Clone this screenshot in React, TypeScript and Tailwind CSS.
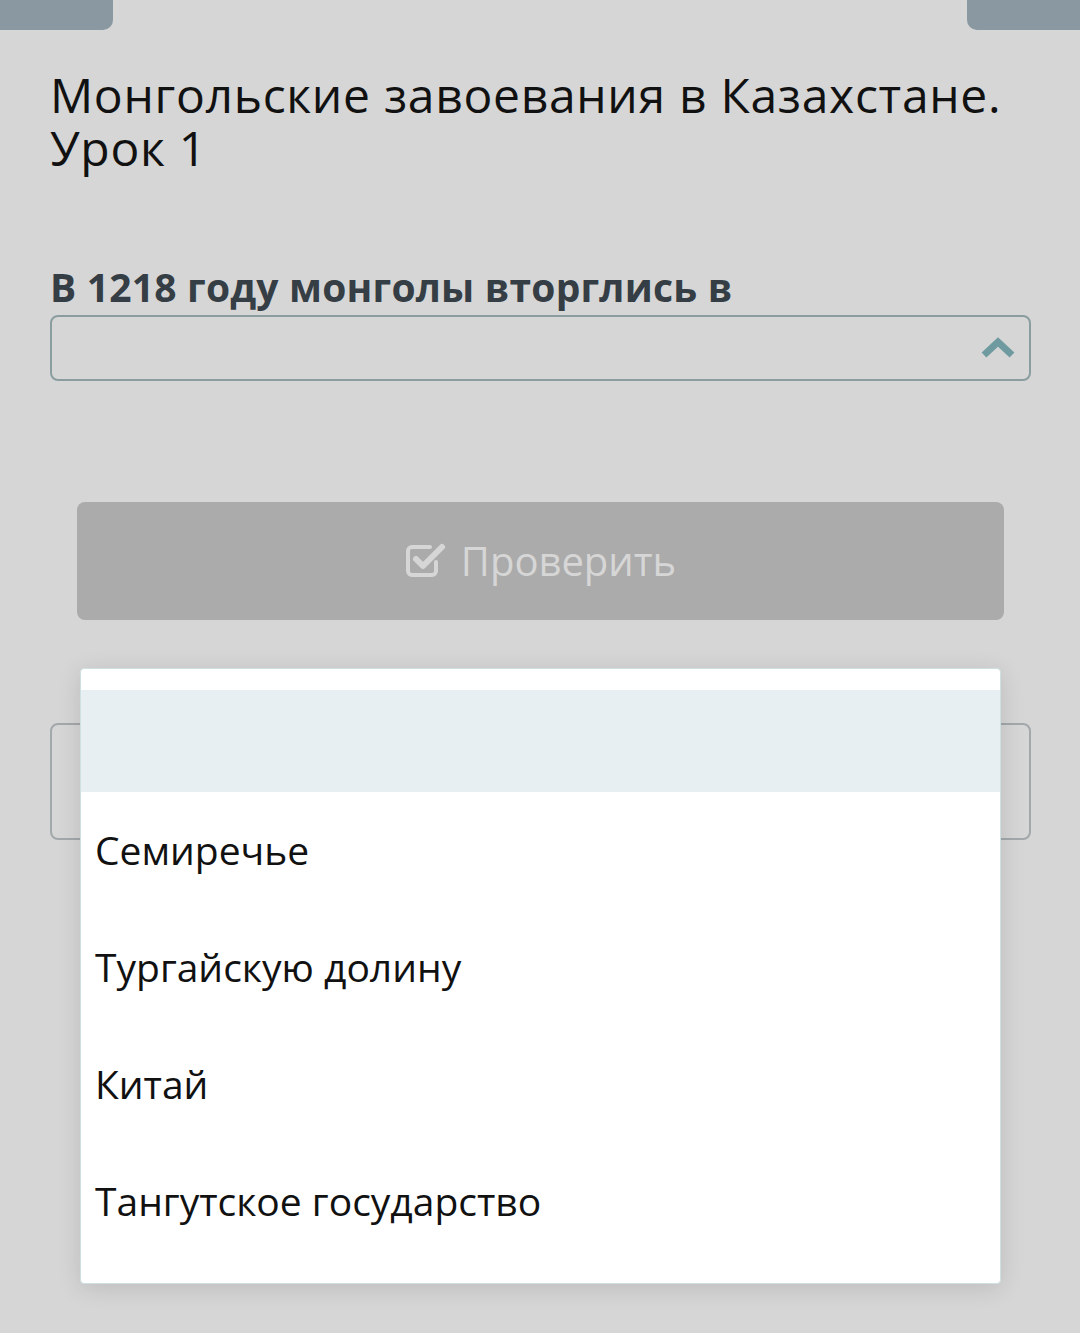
import React from "react";

const options = ["", "Семиречье", "Тургайскую долину", "Китай", "Тангутское государство"];

function CheckSquare() {
  return (
    <svg width="42" height="38" viewBox="0 0 42 38" fill="none">
      <path
        d="M31 20v9a4 4 0 0 1-4 4H7a4 4 0 0 1-4-4V9a4 4 0 0 1 4-4h18"
        stroke="#d6d6d6"
        strokeWidth="4"
        strokeLinecap="round"
      />
      <path d="M11 17l7 7L37 5" stroke="#d6d6d6" strokeWidth="6" strokeLinecap="round" strokeLinejoin="round" />
    </svg>
  );
}

export default function App() {
  return (
    <div
      className="relative w-[1080px] h-[1333px] overflow-hidden bg-[#d6d6d6]"
      style={{ fontFamily: '"Open Sans", "Noto Sans", sans-serif' }}
    >
      {/* top tabs */}
      <div className="flex justify-between">
        <div className="w-[113px] h-[30px] bg-[#8a98a2] rounded-br-[10px]" />
        <div className="w-[113px] h-[30px] bg-[#8a98a2] rounded-bl-[10px]" />
      </div>

      <div className="pl-[50px] pr-[49px]">
        <h1 className="mt-[38px] text-[48px] leading-[53px] tracking-[0.7px] text-[#111] font-normal">
          Монгольские завоевания в Казахстане. Урок 1
        </h1>

        <div className="mt-[93px] text-[39px] leading-[40px] font-bold text-[#353d45] tracking-[0.2px]">
          В 1218 году монголы вторглись в
        </div>

        {/* select */}
        <div className="mt-[8px] h-[66px] border-2 border-[#8a9ea0] rounded-[8px] flex items-center justify-end pr-[12px]">
          <svg width="38" height="24" viewBox="0 0 38 24" fill="none">
            <path d="M5 19L19 6l14 13" stroke="#6f9ba0" strokeWidth="7" strokeLinejoin="miter" />
          </svg>
        </div>

        {/* check button */}
        <div className="mt-[121px] ml-[27px] mr-[27px] h-[118px] bg-[#ababab] rounded-[8px] flex items-center justify-center gap-[14px]">
          <CheckSquare />
          <span className="text-[40px] text-[#d6d6d6]">Проверить</span>
        </div>

        {/* feedback box under dropdown */}
        <div className="mt-[103px] h-[117px] border-2 border-[#a3a8ab] rounded-[8px]" />
      </div>

      {/* dropdown list */}
      <div className="absolute left-[80px] top-[668px] w-[921px] h-[616px] bg-white border border-[#cfe0e2] rounded-[4px] shadow-[0_4px_24px_rgba(0,0,0,0.12)] pt-[21px]">
        {options.map((o, i) => (
          <div
            key={i}
            className={
              i === 0
                ? "h-[102px] bg-[#e8eff2]"
                : "h-[117px] flex items-center px-[14px] text-[39px] text-[#111]"
            }
          >
            {o}
          </div>
        ))}
      </div>
    </div>
  );
}
